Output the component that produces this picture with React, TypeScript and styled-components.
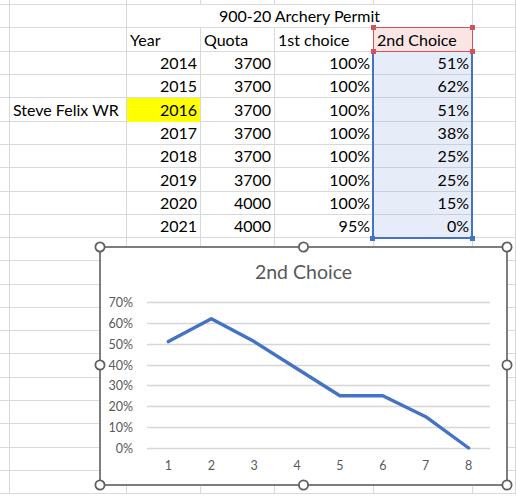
import React from "react";
import styled, { createGlobalStyle } from "styled-components";

const GlobalStyle = createGlobalStyle`
	html, body {
		margin: 0;
		padding: 0;
		background: #ffffff;
	}

	body {
		font-family: Lato, "Liberation Sans", sans-serif;
		overflow: hidden;
	}
`;

const colWidths = [10, 117, 74, 74, 99, 99, 43];
const rowHeights = [
	5, 23, 24, 23, 23, 24, 23, 23, 24, 23, 23, 23, 24, 23, 23, 23, 24, 23, 23, 24,
	23, 23,
];

const GRID = "#d9d9d9";
const BLUE = "#4472c4";
const RED = "#d0555b";

const years = [2014, 2015, 2016, 2017, 2018, 2019, 2020, 2021];
const quotas = [3700, 3700, 3700, 3700, 3700, 3700, 4000, 4000];
const firstChoice = [100, 100, 100, 100, 100, 100, 100, 95];
const secondChoice = [51, 62, 51, 38, 25, 25, 15, 0];

type Align = "left" | "right" | "center";

const Sheet = styled.div`
	position: relative;
	display: grid;
	grid-template-columns: ${colWidths.map((w) => `${w}px`).join(" ")};
	grid-template-rows: ${rowHeights.map((h) => `${h}px`).join(" ")};
	width: 516px;
	height: 500px;
	overflow: hidden;
	font-size: 16px;
	color: #000000;
`;

const Cell = styled.div<{
	$r: number;
	$c: number;
	$span?: number;
	$align?: Align;
	$fill?: string;
	$line?: string;
}>`
	grid-row: ${({ $r }) => $r + 1};
	grid-column: ${({ $c, $span }) => `${$c + 1} / span ${$span ?? 1}`};
	box-sizing: border-box;
	display: flex;
	align-items: flex-end;
	justify-content: ${({ $align }) =>
		$align === "right" ? "flex-end" : $align === "center" ? "center" : "flex-start"};
	padding: 0 3px 1px 3px;
	line-height: 20px;
	white-space: nowrap;
	overflow: hidden;
	background: ${({ $fill }) => $fill ?? "#ffffff"};
	border-right: 1px solid ${GRID};
	border-bottom: 1px solid ${({ $line }) => $line ?? GRID};
`;

const RangeBox = styled.div<{ $r0: number; $r1: number; $c: number; $kind: "active" | "range" }>`
	grid-row: ${({ $r0, $r1 }) => `${$r0 + 1} / ${$r1 + 2}`};
	grid-column: ${({ $c }) => $c + 1};
	position: relative;
	z-index: 1;
	box-sizing: border-box;
	pointer-events: none;
	${({ $kind }) =>
		$kind === "active"
			? `
		margin: -1px 0 0 -1px;
		border: 1px solid ${RED};
	`
			: `
		margin: 0 0 -1px -2px;
		border: 2px solid ${BLUE};
		border-top: none;
	`}
`;

const Handle = styled.span<{ $pos: "tl" | "tr" | "bl" | "br"; $color: string; $off: number }>`
	position: absolute;
	width: 5px;
	height: 5px;
	background: ${({ $color }) => $color};
	${({ $pos, $off }) => ($pos[0] === "t" ? `top: ${$off}px;` : `bottom: ${$off}px;`)}
	${({ $pos, $off }) => ($pos[1] === "l" ? `left: ${$off}px;` : `right: ${$off}px;`)}
`;

const ChartObject = styled.div`
	position: absolute;
	left: 100px;
	top: 247px;
	width: 407px;
	height: 238px;
	z-index: 2;
`;

const ChartSvg = styled.svg`
	display: block;
	overflow: visible;
	font-family: Lato, "Liberation Sans", sans-serif;
`;

const ChartTitle = styled.text`
	font-size: 19.5px;
	fill: #595959;
`;

const AxisLabel = styled.text`
	font-size: 12.5px;
	fill: #595959;
`;

const plotLeft = 47;
const plotRight = 390;
const zeroY = 201;
const tenPct = 20.86;
const catStep = (plotRight - plotLeft) / 8;

const Chart = () => {
	const xs = secondChoice.map((_, i) => plotLeft + catStep * (i + 0.5));
	const points = secondChoice
		.map((v, i) => `${xs[i].toFixed(1)},${(zeroY - (v / 10) * tenPct).toFixed(1)}`)
		.join(" ");
	const handles = [
		[0, 0],
		[203.5, 0],
		[407, 0],
		[0, 118],
		[407, 118],
		[0, 238],
		[203.5, 238],
		[407, 238],
	];

	return (
		<ChartObject>
			<ChartSvg width={407} height={238} viewBox="0 0 407 238">
				<rect x={0} y={0} width={407} height={238} fill="#ffffff" stroke="#7d7d7d" strokeWidth={2} />
				<ChartTitle x={203.5} y={32} textAnchor="middle">
					2nd Choice
				</ChartTitle>
				{[0, 1, 2, 3, 4, 5, 6, 7].map((k) => {
					const y = Math.round(zeroY - k * tenPct) + 0.5;
					return (
						<g key={k}>
							<line x1={plotLeft} x2={plotRight} y1={y} y2={y} stroke="#d6d6d6" strokeWidth={1.3} />
							<AxisLabel x={33} y={y + 4.5} textAnchor="end">
								{k * 10}%
							</AxisLabel>
						</g>
					);
				})}
				{xs.map((x, i) => (
					<AxisLabel key={i} x={x} y={223} textAnchor="middle">
						{i + 1}
					</AxisLabel>
				))}
				<polyline
					points={points}
					fill="none"
					stroke={BLUE}
					strokeWidth={3.4}
					strokeLinejoin="round"
					strokeLinecap="round"
				/>
				{handles.map(([x, y], i) => (
					<circle key={i} cx={x} cy={y} r={4.6} fill="#ffffff" stroke="#5f5f5f" strokeWidth={1.8} />
				))}
			</ChartSvg>
		</ChartObject>
	);
};

const App = () => {
	const cells: React.ReactNode[] = [];

	for (let r = 0; r < rowHeights.length; r++) {
		const d = r - 3;
		const isData = d >= 0 && d < years.length;

		for (let c = 0; c < colWidths.length; c++) {
			const key = `${r}-${c}`;

			if (r === 1) {
				if (c === 2) {
					cells.push(
						<Cell key={key} $r={r} $c={2} $span={4} $align="center">
							900-20 Archery Permit
						</Cell>
					);
				} else if (c < 2 || c > 5) {
					cells.push(<Cell key={key} $r={r} $c={c} />);
				}
				continue;
			}

			if (r === 2) {
				const heads: Record<number, string> = {
					2: "Year",
					3: "Quota",
					4: "1st choice",
					5: "2nd Choice",
				};
				cells.push(
					<Cell key={key} $r={r} $c={c} $fill={c === 5 ? "#fbe4e4" : undefined}>
						{heads[c]}
					</Cell>
				);
				continue;
			}

			if (isData) {
				if (c === 1 && years[d] === 2016) {
					cells.push(
						<Cell key={key} $r={r} $c={c}>
							Steve Felix WR
						</Cell>
					);
				} else if (c === 2) {
					const hi = years[d] === 2016;
					cells.push(
						<Cell
							key={key}
							$r={r}
							$c={c}
							$align="right"
							$fill={hi ? "#ffff00" : undefined}
							$line={hi ? "#ffff00" : undefined}
						>
							{years[d]}
						</Cell>
					);
				} else if (c === 3) {
					cells.push(
						<Cell key={key} $r={r} $c={c} $align="right">
							{quotas[d]}
						</Cell>
					);
				} else if (c === 4) {
					cells.push(
						<Cell key={key} $r={r} $c={c} $align="right">
							{firstChoice[d]}%
						</Cell>
					);
				} else if (c === 5) {
					cells.push(
						<Cell key={key} $r={r} $c={c} $align="right" $fill="#e7edf8" $line="#c8d0de">
							{secondChoice[d]}%
						</Cell>
					);
				} else {
					cells.push(<Cell key={key} $r={r} $c={c} />);
				}
				continue;
			}

			cells.push(<Cell key={key} $r={r} $c={c} />);
		}
	}

	return (
		<>
			<GlobalStyle />
			<Sheet>
				{cells}
				<RangeBox $r0={3} $r1={10} $c={5} $kind="range">
					<Handle $pos="bl" $color={BLUE} $off={-4} />
					<Handle $pos="br" $color={BLUE} $off={-4} />
				</RangeBox>
				<RangeBox $r0={2} $r1={2} $c={5} $kind="active">
					<Handle $pos="tl" $color={RED} $off={-3} />
					<Handle $pos="tr" $color={RED} $off={-3} />
					<Handle $pos="bl" $color={RED} $off={-3} />
					<Handle $pos="br" $color={RED} $off={-3} />
				</RangeBox>
				<Chart />
			</Sheet>
		</>
	);
};

export default App;
